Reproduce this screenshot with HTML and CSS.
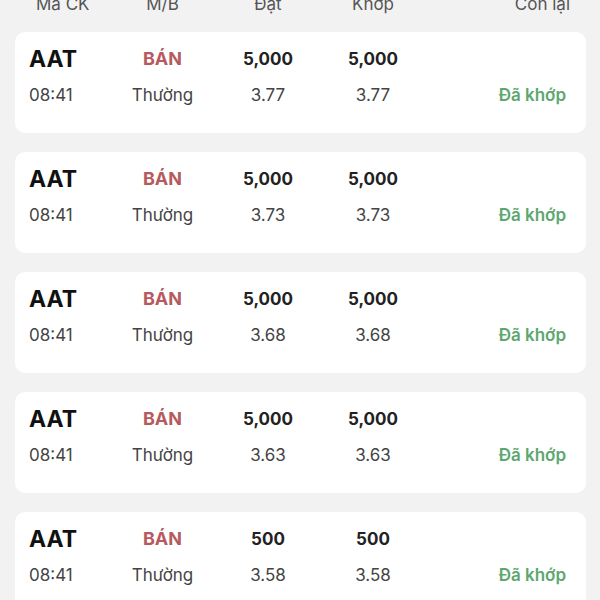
FILE: index.html
```html
<!DOCTYPE html>
<html lang="vi">
<head>
<meta charset="utf-8">
<link rel="stylesheet" href="styles.css">
</head>
<body>
<div class="page">
  <div class="head grid">
    <div class="c1 hfirst">Mã CK</div>
    <div class="cc">M/B</div>
    <div class="cc">Đặt</div>
    <div class="cc">Khớp</div>
    <div class="cr">Còn lại</div>
  </div>

  <div class="card">
    <div class="grid r1">
      <div class="c1 sym">AAT</div><div class="cc sell">BÁN</div><div class="cc qty">5,000</div><div class="cc qty">5,000</div><div class="cr"></div>
    </div>
    <div class="grid r2">
      <div class="c1">08:41</div><div class="cc">Thường</div><div class="cc">3.77</div><div class="cc">3.77</div><div class="cr ok">Đã khớp</div>
    </div>
  </div>

  <div class="card">
    <div class="grid r1">
      <div class="c1 sym">AAT</div><div class="cc sell">BÁN</div><div class="cc qty">5,000</div><div class="cc qty">5,000</div><div class="cr"></div>
    </div>
    <div class="grid r2">
      <div class="c1">08:41</div><div class="cc">Thường</div><div class="cc">3.73</div><div class="cc">3.73</div><div class="cr ok">Đã khớp</div>
    </div>
  </div>

  <div class="card">
    <div class="grid r1">
      <div class="c1 sym">AAT</div><div class="cc sell">BÁN</div><div class="cc qty">5,000</div><div class="cc qty">5,000</div><div class="cr"></div>
    </div>
    <div class="grid r2">
      <div class="c1">08:41</div><div class="cc">Thường</div><div class="cc">3.68</div><div class="cc">3.68</div><div class="cr ok">Đã khớp</div>
    </div>
  </div>

  <div class="card">
    <div class="grid r1">
      <div class="c1 sym">AAT</div><div class="cc sell">BÁN</div><div class="cc qty">5,000</div><div class="cc qty">5,000</div><div class="cr"></div>
    </div>
    <div class="grid r2">
      <div class="c1">08:41</div><div class="cc">Thường</div><div class="cc">3.63</div><div class="cc">3.63</div><div class="cr ok">Đã khớp</div>
    </div>
  </div>

  <div class="card">
    <div class="grid r1">
      <div class="c1 sym">AAT</div><div class="cc sell">BÁN</div><div class="cc qty">500</div><div class="cc qty">500</div><div class="cr"></div>
    </div>
    <div class="grid r2">
      <div class="c1">08:41</div><div class="cc">Thường</div><div class="cc">3.58</div><div class="cc">3.58</div><div class="cr ok">Đã khớp</div>
    </div>
  </div>
</div>
</body>
</html>
```

FILE: styles.css
```css
html, body {
  margin: 0;
  padding: 0;
  background: #f2f2f2;
  height: 600px;
  overflow: hidden;
}
.page {
  font-family: Inter, "Noto Sans", sans-serif;
  padding: 0 14px 0 15px;
  display: flex;
  flex-direction: column;
  gap: 19px;
}
.grid {
  display: grid;
  grid-template-columns: 81px 105px 106px 104px 1fr;
  align-items: center;
}
.c1 { text-align: left; }
.cc { text-align: center; }
.cr { text-align: right; }
.head {
  margin-top: -6px;
  margin-bottom: -1px;
  padding: 0 16px 0 14px;
  font-size: 17px;
  line-height: 20px;
  color: #555;
}
.hfirst { padding-left: 7px; }
.card {
  background: #fff;
  border-radius: 10px;
  height: 101px;
  box-sizing: border-box;
  padding: 15px 20px 0 14px;
  display: flex;
  flex-direction: column;
  gap: 12px;
}
.r1, .r2 { height: 24px; line-height: 24px; }
.r1 { font-weight: 700; font-size: 17px; color: #222; }
.r2 { font-size: 17px; color: #444; }
.sym { font-size: 23px; color: #111; font-weight: 700; }
.sell { font-size: 18px; color: #b55b5d; }
.qty { color: #222; }
.ok { color: #5ea86f; font-weight: 600; }
```
